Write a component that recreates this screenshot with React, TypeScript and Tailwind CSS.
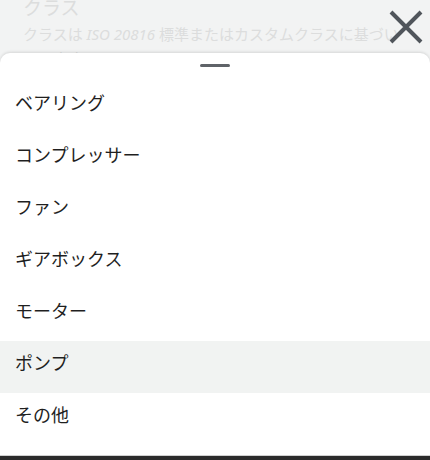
import React from 'react';

const items = ['ベアリング', 'コンプレッサー', 'ファン', 'ギアボックス', 'モーター', 'ポンプ', 'その他'];

export default function App() {
  const selected = 'ポンプ';

  return (
    <div
      className="relative h-[460px] w-[430px] overflow-hidden bg-[#f2f3f3]"
      style={{ fontFamily: '"Noto Sans", "Noto Sans CJK JP", sans-serif' }}
    >
      {/* page behind the sheet */}
      <div className="pl-[23px] pr-[18px] text-[#dcdddd]">
        <div className="-mt-[6px] text-[19px] leading-[28px]">クラス</div>
        <div className="text-[15px] leading-[24px]">
          クラスは <i>ISO 20816</i> 標準またはカスタムクラスに基づいています
        </div>
      </div>

      <button className="absolute right-[6px] top-[9px] flex h-[36px] w-[36px] items-center justify-center">
        <svg width="36" height="36" viewBox="0 0 36 36">
          <path d="M3 3 L33 33 M33 3 L3 33" stroke="#50555b" strokeWidth="4" strokeLinecap="butt" />
        </svg>
      </button>

      {/* bottom sheet */}
      <div className="absolute inset-x-0 top-[53px] bottom-[5px] rounded-t-[10px] bg-white shadow-[0_-1px_3px_rgba(0,0,0,0.12)]">
        <div className="flex justify-center pt-[11px] pb-[14px]">
          <div className="h-[3px] w-[30px] rounded-full bg-[#5f6368]" />
        </div>
        <ul>
          {items.map((it) => (
            <li
              key={it}
              className={`flex h-[52px] items-center px-[15px] pb-[8px] text-[18px] text-[#1f1f1f] ${
                it === selected ? 'bg-[#f1f3f2]' : ''
              }`}
            >
              {it}
            </li>
          ))}
        </ul>
      </div>

      <div className="absolute inset-x-0 bottom-0 h-[5px] border-t border-[#d0d0d0] bg-[#2b2b2b]" />
    </div>
  );
}
